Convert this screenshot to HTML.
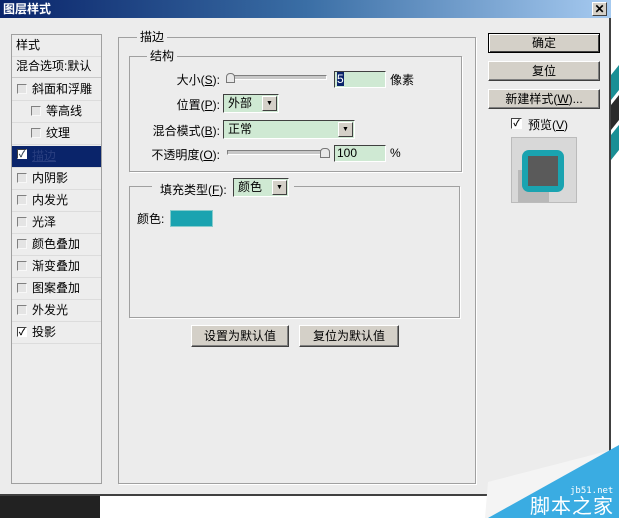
<!DOCTYPE html>
<html><head><meta charset="utf-8"><style>
*{margin:0;padding:0;box-sizing:border-box}
body{width:619px;height:518px;position:relative;overflow:hidden;background:#fff;font-family:"Liberation Sans","Noto Sans CJK SC","WenQuanYi Zen Hei",sans-serif;font-size:12px;color:#000}
.a{position:absolute}
.dlg{left:0;top:0;width:611px;height:496px;background:#ececec;border-right:2px solid #404040;border-bottom:2px solid #404040}
.title{left:0;top:0;width:611px;height:18px;background:linear-gradient(90deg,#0a246a,#3a6ea5 50%,#a6caf0);color:#fff;font-weight:bold;font-size:12px;line-height:18px;padding-left:3px}
.close{left:592px;top:2px;width:15px;height:14px;background:#d4d0c8;border:1px solid;border-color:#fff #404040 #404040 #fff;color:#000;font-size:12px;line-height:12px;text-align:center;font-weight:bold}
.grp{border:1px solid #a0a0a0;box-shadow:1px 1px 0 #fff}
.leg{background:#ececec;padding:0 3px}
.list{left:11px;top:34px;width:91px;height:450px;border:1px solid #a0a0a0;background:#ededed}
.it{position:absolute;left:0;width:89px;height:22px;border-bottom:1px solid #dcdcdc;line-height:21px}
.cb{position:absolute;top:5px;width:10px;height:10px;border:1px solid;border-color:#808080 #f8f8f8 #f8f8f8 #808080;background:#e4e4e4}
.cbk{background:#fff;border-color:#404040 #fff #fff #404040;font-size:9px;line-height:8px;text-align:center;font-weight:bold}
.lb{position:absolute;text-align:right}
.inp{background:#cfe9d3;border:1px solid;border-color:#404040 #fff #fff #404040;height:17px;line-height:15px;padding-left:2px}
.dd{background:#cfe9d3;border:1px solid;border-color:#404040 #fff #fff #404040;height:19px;line-height:17px;padding-left:4px}
.arr{position:absolute;right:1px;top:1px;width:15px;height:15px;background:#d4d0c8;border:1px solid;border-color:#fff #404040 #404040 #fff;font-size:7px;line-height:13px;text-align:center}
.sl{height:5px;border:1px solid;border-color:#808080 #fff #fff #808080;background:#c8c8c8}
.btn{background:#d4d0c8;border:1px solid;border-color:#fff #404040 #404040 #fff;box-shadow:inset -1px -1px 0 #808080;text-align:center;line-height:18px}
</style></head><body>
<svg class="a" style="left:611px;top:60px" width="8" height="110"><polygon points="0,15 8,5 8,30 0,40" fill="#1a8f95"/><polygon points="0,45 8,35 8,60 0,70" fill="#2a2a2a"/><polygon points="0,75 8,65 8,90 0,100" fill="#1a8f95"/></svg>
<div class="a" style="left:0;top:496px;width:100px;height:22px;background:#222"></div>
<div class="a dlg"></div>
<div class="a title">图层样式</div>
<div class="a close">✕</div>

<div class="a list">
 <div class="it" style="top:0;padding-left:4px">样式</div>
 <div class="it" style="top:21px;padding-left:4px;border-bottom:1px solid #c8c8c8">混合选项:默认</div>
 <div class="it" style="top:44px"><span class="cb" style="left:5px"></span><span style="position:absolute;left:20px">斜面和浮雕</span></div>
 <div class="it" style="top:66px"><span class="cb" style="left:19px"></span><span style="position:absolute;left:34px">等高线</span></div>
 <div class="it" style="top:88px"><span class="cb" style="left:19px"></span><span style="position:absolute;left:34px">纹理</span></div>
 <div class="it" style="top:111px;background:#0a246a;color:#345"><span class="cb cbk" style="left:5px;top:3px">✓</span><span style="position:absolute;left:20px;text-decoration:underline;color:#2a3f80">描边</span></div>
 <div class="it" style="top:133px"><span class="cb" style="left:5px"></span><span style="position:absolute;left:20px">内阴影</span></div>
 <div class="it" style="top:155px"><span class="cb" style="left:5px"></span><span style="position:absolute;left:20px">内发光</span></div>
 <div class="it" style="top:177px"><span class="cb" style="left:5px"></span><span style="position:absolute;left:20px">光泽</span></div>
 <div class="it" style="top:199px"><span class="cb" style="left:5px"></span><span style="position:absolute;left:20px">颜色叠加</span></div>
 <div class="it" style="top:221px"><span class="cb" style="left:5px"></span><span style="position:absolute;left:20px">渐变叠加</span></div>
 <div class="it" style="top:243px"><span class="cb" style="left:5px"></span><span style="position:absolute;left:20px">图案叠加</span></div>
 <div class="it" style="top:265px"><span class="cb" style="left:5px"></span><span style="position:absolute;left:20px">外发光</span></div>
 <div class="it" style="top:287px"><span class="cb cbk" style="left:5px">✓</span><span style="position:absolute;left:20px">投影</span></div>
</div>

<div class="a grp" style="left:118px;top:37px;width:358px;height:447px"></div>
<div class="a leg" style="left:137px;top:28px">描边</div>
<div class="a grp" style="left:129px;top:56px;width:333px;height:116px"></div>
<div class="a leg" style="left:147px;top:47px">结构</div>

<div class="lb a" style="left:130px;width:90px;top:71px">大小(<u>S</u>):</div>
<div class="a sl" style="left:227px;top:75px;width:100px"></div>
<div class="a" style="left:226px;top:73px;width:9px;height:10px;background:#e8e8e8;border:1px solid #777;border-radius:4px 4px 0 0"></div>
<div class="a inp" style="left:334px;top:71px;width:52px"><span style="background:#0a246a;color:#fff">5</span></div>
<div class="a" style="left:390px;top:71px">像素</div>

<div class="lb a" style="left:130px;width:90px;top:96px">位置(<u>P</u>):</div>
<div class="a dd" style="left:223px;top:94px;width:56px">外部<span class="arr">▼</span></div>

<div class="lb a" style="left:130px;width:90px;top:122px">混合模式(<u>B</u>):</div>
<div class="a dd" style="left:223px;top:120px;width:132px">正常<span class="arr">▼</span></div>

<div class="lb a" style="left:130px;width:90px;top:146px">不透明度(<u>O</u>):</div>
<div class="a sl" style="left:227px;top:150px;width:103px"></div>
<div class="a" style="left:320px;top:148px;width:10px;height:10px;background:#e8e8e8;border:1px solid #777;border-radius:4px 4px 0 0"></div>
<div class="a inp" style="left:334px;top:145px;width:52px">100</div>
<div class="a" style="left:390px;top:146px">%</div>

<div class="a grp" style="left:129px;top:186px;width:331px;height:132px"></div>
<div class="a leg" style="left:152px;top:178px;padding-right:4px;height:20px;width:142px"></div>
<div class="a" style="left:160px;top:181px">填充类型(<u>F</u>):</div>
<div class="a dd" style="left:233px;top:178px;width:56px">颜色<span class="arr">▼</span></div>
<div class="a" style="left:137px;top:210px">颜色:</div>
<div class="a" style="left:170px;top:210px;width:43px;height:17px;background:#1aa3b0;border:1px solid #8cc"></div>

<div class="a btn" style="left:191px;top:325px;width:98px;height:22px;line-height:20px">设置为默认值</div>
<div class="a btn" style="left:299px;top:325px;width:100px;height:22px;line-height:20px">复位为默认值</div>

<div class="a btn" style="left:488px;top:33px;width:112px;height:20px;border:1px solid #000;box-shadow:inset 1px 1px 0 #fff,inset -1px -1px 0 #404040">确定</div>
<div class="a btn" style="left:488px;top:61px;width:112px;height:20px">复位</div>
<div class="a btn" style="left:488px;top:89px;width:112px;height:20px">新建样式(<u>W</u>)...</div>
<div class="a cb cbk" style="left:511px;top:118px;width:11px;height:11px">✓</div>
<div class="a" style="left:528px;top:116px">预览(<u>V</u>)</div>
<div class="a" style="left:511px;top:137px;width:66px;height:66px;background:#d8d8d8;border:1px solid #bbb"></div>
<div class="a" style="left:518px;top:170px;width:31px;height:32px;background:#b8b8b8"></div>
<div class="a" style="left:522px;top:150px;width:42px;height:42px;background:#1aa3b0;border-radius:7px"></div>
<div class="a" style="left:528px;top:156px;width:30px;height:30px;background:#5a5a5a"></div>

<svg class="a" style="left:480px;top:440px" width="139" height="78"><polygon points="8,42 139,8 139,78 5,78" fill="#f4f4f4"/><polygon points="139,5 139,78 8,78" fill="#3aace2"/></svg>
<div class="a" style="left:570px;top:486px;color:#fff;font-size:9px;font-family:'DejaVu Sans Mono',monospace;white-space:nowrap">jb51.net</div>
<div class="a" style="left:530px;top:497px;color:#fff;font-size:20px;line-height:20px;letter-spacing:1px;white-space:nowrap">脚本之家</div>
</body></html>
